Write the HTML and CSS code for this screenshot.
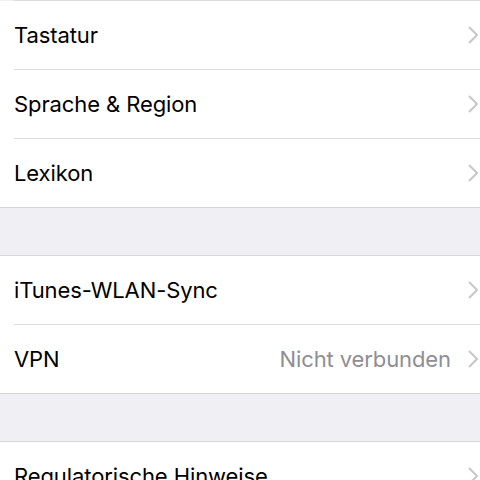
FILE: index.html
```html
<!DOCTYPE html>
<html lang="de">
<head>
    <meta charset="UTF-8">
    <meta name="viewport" content="width=device-width, initial-scale=1.0">
    <title>Allgemein</title>
    <link rel="stylesheet" href="styles.css">
</head>
<body>
<div class="top-line"></div>

<ul class="group group-first">
    <li class="row">
        <span class="label">Tastatur</span>
        <span class="chevron"><svg width="10" height="18" viewBox="0 0 10 18"><path d="M1 1 L9 9 L1 17" /></svg></span>
    </li>
    <li class="row">
        <span class="label">Sprache &amp; Region</span>
        <span class="chevron"><svg width="10" height="18" viewBox="0 0 10 18"><path d="M1 1 L9 9 L1 17" /></svg></span>
    </li>
    <li class="row">
        <span class="label">Lexikon</span>
        <span class="chevron"><svg width="10" height="18" viewBox="0 0 10 18"><path d="M1 1 L9 9 L1 17" /></svg></span>
    </li>
</ul>

<div class="spacer"></div>

<ul class="group">
    <li class="row">
        <span class="label">iTunes-WLAN-Sync</span>
        <span class="chevron"><svg width="10" height="18" viewBox="0 0 10 18"><path d="M1 1 L9 9 L1 17" /></svg></span>
    </li>
    <li class="row">
        <span class="label">VPN</span>
        <span class="value">Nicht verbunden</span>
        <span class="chevron"><svg width="10" height="18" viewBox="0 0 10 18"><path d="M1 1 L9 9 L1 17" /></svg></span>
    </li>
</ul>

<div class="spacer"></div>

<ul class="group">
    <li class="row">
        <span class="label">Regulatorische Hinweise</span>
        <span class="chevron"><svg width="10" height="18" viewBox="0 0 10 18"><path d="M1 1 L9 9 L1 17" /></svg></span>
    </li>
</ul>
</body>
</html>
```

FILE: styles.css
```css
body {
  font-family: Inter, "Noto Sans", sans-serif;
  background-color: #efeff4;
  margin: 0;
  padding: 0;
  color: #000;
  overflow: hidden;
}

.top-line {
  height: 1px;
  margin-left: 14px;
  background-color: #dcdce0;
}

.group {
  list-style: none;
  margin: 0;
  padding: 0 0 0 14px;
  background-color: white;
  border-top: 1px solid #d6d6da;
  border-bottom: 1px solid #d6d6da;
}

.group-first {
  border-top: none;
}

.row {
  display: flex;
  align-items: center;
  height: 68px;
  padding-right: 2px;
  border-bottom: 1px solid #dcdce0;
}

.row:last-child {
  border-bottom: none;
}

.label {
  flex: 1;
  font-size: 22px;
  letter-spacing: -0.1px;
}

.value {
  font-size: 22px;
  color: #8e8e93;
  letter-spacing: -0.1px;
  margin-right: 17px;
}

.chevron {
  display: flex;
  width: 10px;
  height: 18px;
}

.chevron path {
  fill: none;
  stroke: #c7c7cc;
  stroke-width: 2;
}

.spacer {
  height: 47px;
}
```
